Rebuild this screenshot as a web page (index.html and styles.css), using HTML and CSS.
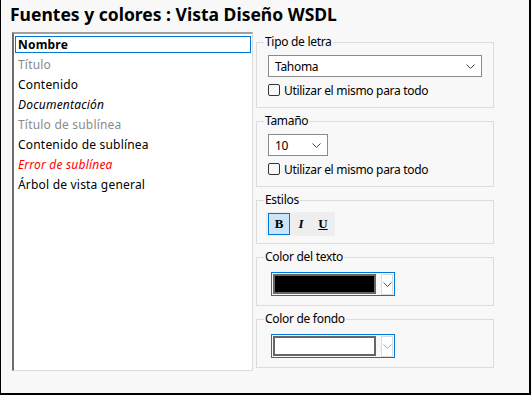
FILE: index.html
```html
<!DOCTYPE html>
<html lang="es">
<head>
	<meta charset="UTF-8">
	<title>Fuentes y colores</title>
	<link rel="stylesheet" href="styles.css">
</head>
<body>

<div class="dialog">
	<h1 class="title">Fuentes y colores : Vista Diseño WSDL</h1>

	<div class="main">
		<ul class="item-list">
			<li class="item selected">Nombre</li>
			<li class="item muted">Título</li>
			<li class="item">Contenido</li>
			<li class="item italic">Documentación</li>
			<li class="item muted">Título de sublínea</li>
			<li class="item">Contenido de sublínea</li>
			<li class="item italic error">Error de sublínea</li>
			<li class="item">Árbol de vista general</li>
		</ul>

		<div class="options">
			<fieldset class="group">
				<legend>Tipo de letra</legend>
				<div class="select font-select">
					<span>Tahoma</span>
					<svg class="chevron" width="9" height="5" viewBox="0 0 9 5"><polyline points="0.5,0.5 4.5,4.5 8.5,0.5" fill="none" stroke="#444" stroke-width="1"/></svg>
				</div>
				<label class="check"><span class="box"></span>Utilizar el mismo para todo</label>
			</fieldset>

			<fieldset class="group">
				<legend>Tamaño</legend>
				<div class="select size-select">
					<span>10</span>
					<svg class="chevron" width="9" height="5" viewBox="0 0 9 5"><polyline points="0.5,0.5 4.5,4.5 8.5,0.5" fill="none" stroke="#444" stroke-width="1"/></svg>
				</div>
				<label class="check"><span class="box"></span>Utilizar el mismo para todo</label>
			</fieldset>

			<fieldset class="group styles-group">
				<legend>Estilos</legend>
				<div class="toolbar">
					<button class="tool active"><b>B</b></button>
					<button class="tool"><b><i>I</i></b></button>
					<button class="tool"><b><u>U</u></b></button>
				</div>
			</fieldset>

			<fieldset class="group color-group">
				<legend>Color del texto</legend>
				<div class="color-combo">
					<span class="swatch black"></span>
					<span class="drop">
						<svg width="9" height="5" viewBox="0 0 9 5"><polyline points="0.5,0.5 4.5,4.5 8.5,0.5" fill="none" stroke="#555" stroke-width="1"/></svg>
					</span>
				</div>
			</fieldset>

			<fieldset class="group color-group">
				<legend>Color de fondo</legend>
				<div class="color-combo">
					<span class="swatch white"></span>
					<span class="drop">
						<svg width="9" height="5" viewBox="0 0 9 5"><polyline points="0.5,0.5 4.5,4.5 8.5,0.5" fill="none" stroke="#aaa" stroke-width="1"/></svg>
					</span>
				</div>
			</fieldset>
		</div>
	</div>
</div>

</body>
</html>
```

FILE: styles.css
```css
* {
	box-sizing: border-box;
}
body {
	margin: 0;
	font-family: "Noto Sans", "Open Sans", sans-serif;
	font-size: 12px;
	color: #000;
}
.dialog {
	width: 531px;
	height: 395px;
	background-color: #f8f8f8;
	border-left: 1px solid #000;
	border-right: 2px solid #000;
	border-bottom: 2px solid #000;
	padding-left: 9px;
}
.title {
	margin: 0;
	height: 32px;
	padding-top: 3px;
	font-size: 17.5px;
	line-height: 22px;
	font-weight: bold;
}
.main {
	display: flex;
	gap: 3px;
	margin-left: 2px;
}
.item-list {
	list-style: none;
	margin: 0;
	width: 241px;
	height: 339px;
	padding: 2px 1px 0 1px;
	background-color: #fff;
	border-top: 2px solid #a0a0a0;
	border-left: 2px solid #6e6e6e;
	border-right: 1px solid #dcdcdc;
	border-bottom: 1px solid #dcdcdc;
}
.item {
	height: 17px;
	line-height: 15px;
	margin-bottom: 3px;
	padding-left: 2px;
	border: 1px solid transparent;
	white-space: nowrap;
	letter-spacing: 0.2px;
}
.item.selected {
	border-color: #0078d7;
	font-weight: bold;
}
.item.muted {
	color: #8a8a8a;
}
.item.italic {
	font-style: italic;
}
.item.error {
	color: #ff0000;
}
.options {
	display: flex;
	flex-direction: column;
	gap: 5px;
	width: 238px;
	padding-top: 2px;
	letter-spacing: -0.3px;
}
.group {
	margin: 0;
	border: 1px solid #dcdcdc;
	padding: 5px 11px 10px 11px;
}
.group legend {
	margin-left: -4px;
	padding: 0 1px;
	line-height: 16px;
}
.select {
	display: flex;
	align-items: center;
	justify-content: space-between;
	height: 22px;
	padding: 0 6px 0 6px;
	background-color: #fff;
	border: 1px solid #8a8a8a;
}
.size-select {
	width: 60px;
}
.check {
	display: flex;
	align-items: center;
	gap: 4px;
	margin-top: 6px;
	height: 14px;
}
.check .box {
	width: 12px;
	height: 12px;
	border: 1px solid #333;
	border-radius: 2px;
	background-color: #f8f8f8;
}
.styles-group {
	padding-top: 4px;
	padding-bottom: 7px;
}
.toolbar {
	display: flex;
	width: 69px;
	height: 24px;
	margin-left: -2px;
	padding: 1px 1px 1px 2px;
	background-color: #eeeeee;
}
.tool {
	width: 22px;
	height: 22px;
	padding: 0;
	border: 1px solid transparent;
	background: none;
	font-family: "Liberation Serif", "DejaVu Serif", serif;
	font-size: 13px;
	color: #000;
}
.tool.active {
	background-color: #cce4f7;
	border-color: #0078d7;
}
.color-group {
	padding-top: 7px;
	padding-bottom: 9px;
}
.color-combo {
	display: flex;
	align-items: center;
	gap: 5px;
	width: 124px;
	height: 24px;
	margin-left: 3px;
	padding: 1px;
	border: 1px solid #0078d7;
}
.swatch {
	width: 104px;
	height: 20px;
	border: 2px solid #666;
}
.swatch.black {
	background-color: #000;
}
.swatch.white {
	background-color: #fff;
}
.drop {
	display: flex;
	align-items: center;
	justify-content: center;
	width: 12px;
	height: 21px;
	background-color: #fff;
	border: 1px solid #dcdcdc;
}
```
